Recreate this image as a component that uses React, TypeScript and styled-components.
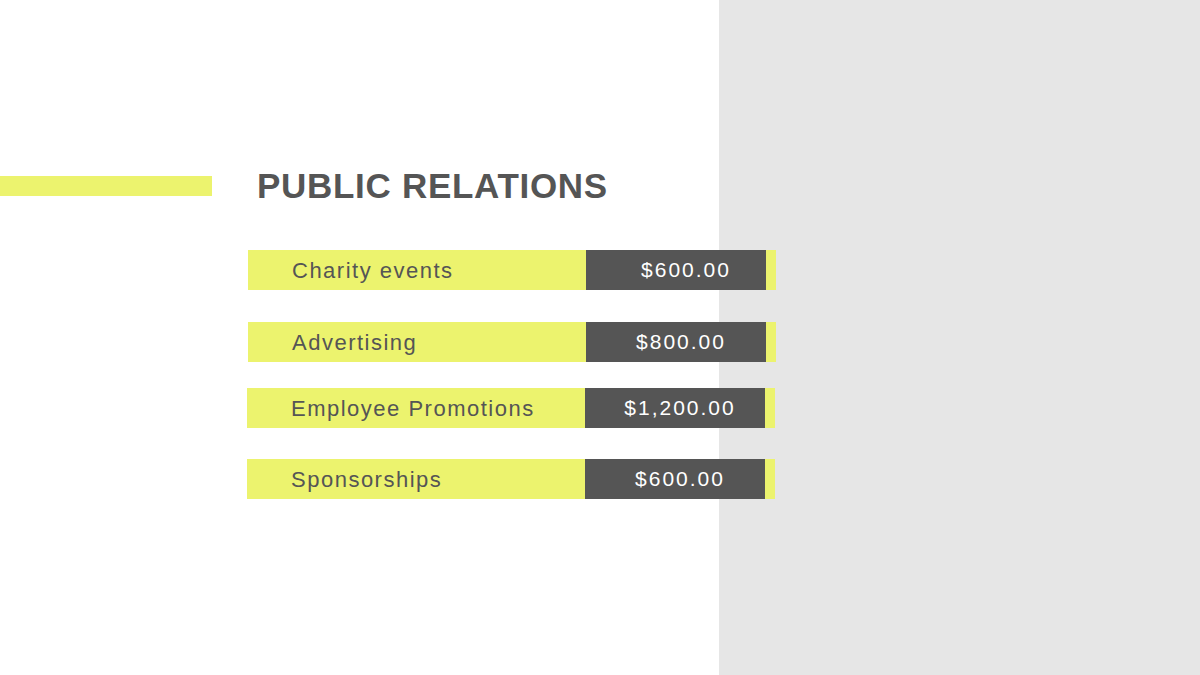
import React from 'react';
import styled, { createGlobalStyle } from 'styled-components';

const GlobalStyle = createGlobalStyle`
  html, body {
    margin: 0;
    padding: 0;
    background: #ffffff;
  }
  body {
    font-family: "Liberation Sans", Arial, sans-serif;
  }
`;

const colors = {
  yellow: '#ecf36e',
  dark: '#555555',
  grey: '#e6e6e6',
  text: '#555555',
};

interface Item {
  label: string;
  amount: string;
  top: number;
  left: number;
  nudge?: number;
}

const items: Item[] = [
  { label: 'Charity events', amount: '$600.00', top: 48, left: 248, nudge: 20 },
  { label: 'Advertising', amount: '$800.00', top: 32, left: 248 },
  { label: 'Employee Promotions', amount: '$1,200.00', top: 26, left: 247 },
  { label: 'Sponsorships', amount: '$600.00', top: 31, left: 247 },
];

const Page = styled.div`
  display: flex;
  width: 1200px;
  height: 675px;
  overflow: hidden;
`;

const Content = styled.main`
  width: 719px;
  flex-shrink: 0;
  padding-top: 170px;
  box-sizing: border-box;
  background: #ffffff;
  position: relative;
  z-index: 1;
`;

const SidePanel = styled.aside`
  flex: 1;
  background: ${colors.grey};
`;

const Header = styled.header`
  display: flex;
  align-items: center;
  height: 32px;
`;

const Accent = styled.div`
  width: 212px;
  height: 20px;
  background: ${colors.yellow};
  flex-shrink: 0;
`;

const Title = styled.h1`
  margin: 0 0 0 45px;
  font-size: 35px;
  line-height: 32px;
  font-weight: 700;
  letter-spacing: 0.7px;
  color: ${colors.text};
  white-space: nowrap;
`;

const List = styled.div`
  display: flex;
  flex-direction: column;
`;

const Row = styled.div<{ $top: number; $left: number }>`
  display: flex;
  width: 528px;
  height: 40px;
  margin-top: ${(p) => p.$top}px;
  margin-left: ${(p) => p.$left}px;
  background: ${colors.yellow};
  position: relative;
  z-index: 2;
`;

const Label = styled.div`
  width: 338px;
  box-sizing: border-box;
  padding: 1px 0 0 44px;
  display: flex;
  align-items: center;
  font-size: 22px;
  letter-spacing: 1.5px;
  color: ${colors.text};
  white-space: nowrap;
`;

const Amount = styled.div<{ $nudge: number }>`
  width: 180px;
  box-sizing: border-box;
  padding-left: ${(p) => p.$nudge}px;
  background: ${colors.dark};
  display: flex;
  align-items: center;
  justify-content: center;
  font-size: 21px;
  letter-spacing: 2px;
  color: #ffffff;
  white-space: nowrap;
`;

export default function App() {
  return (
    <>
      <GlobalStyle />
      <Page>
        <Content>
          <Header>
            <Accent />
            <Title>PUBLIC RELATIONS</Title>
          </Header>
          <List>
            {items.map((item) => (
              <Row key={item.label} $top={item.top} $left={item.left}>
                <Label>{item.label}</Label>
                <Amount $nudge={item.nudge ?? 10}>{item.amount}</Amount>
              </Row>
            ))}
          </List>
        </Content>
        <SidePanel />
      </Page>
    </>
  );
}
